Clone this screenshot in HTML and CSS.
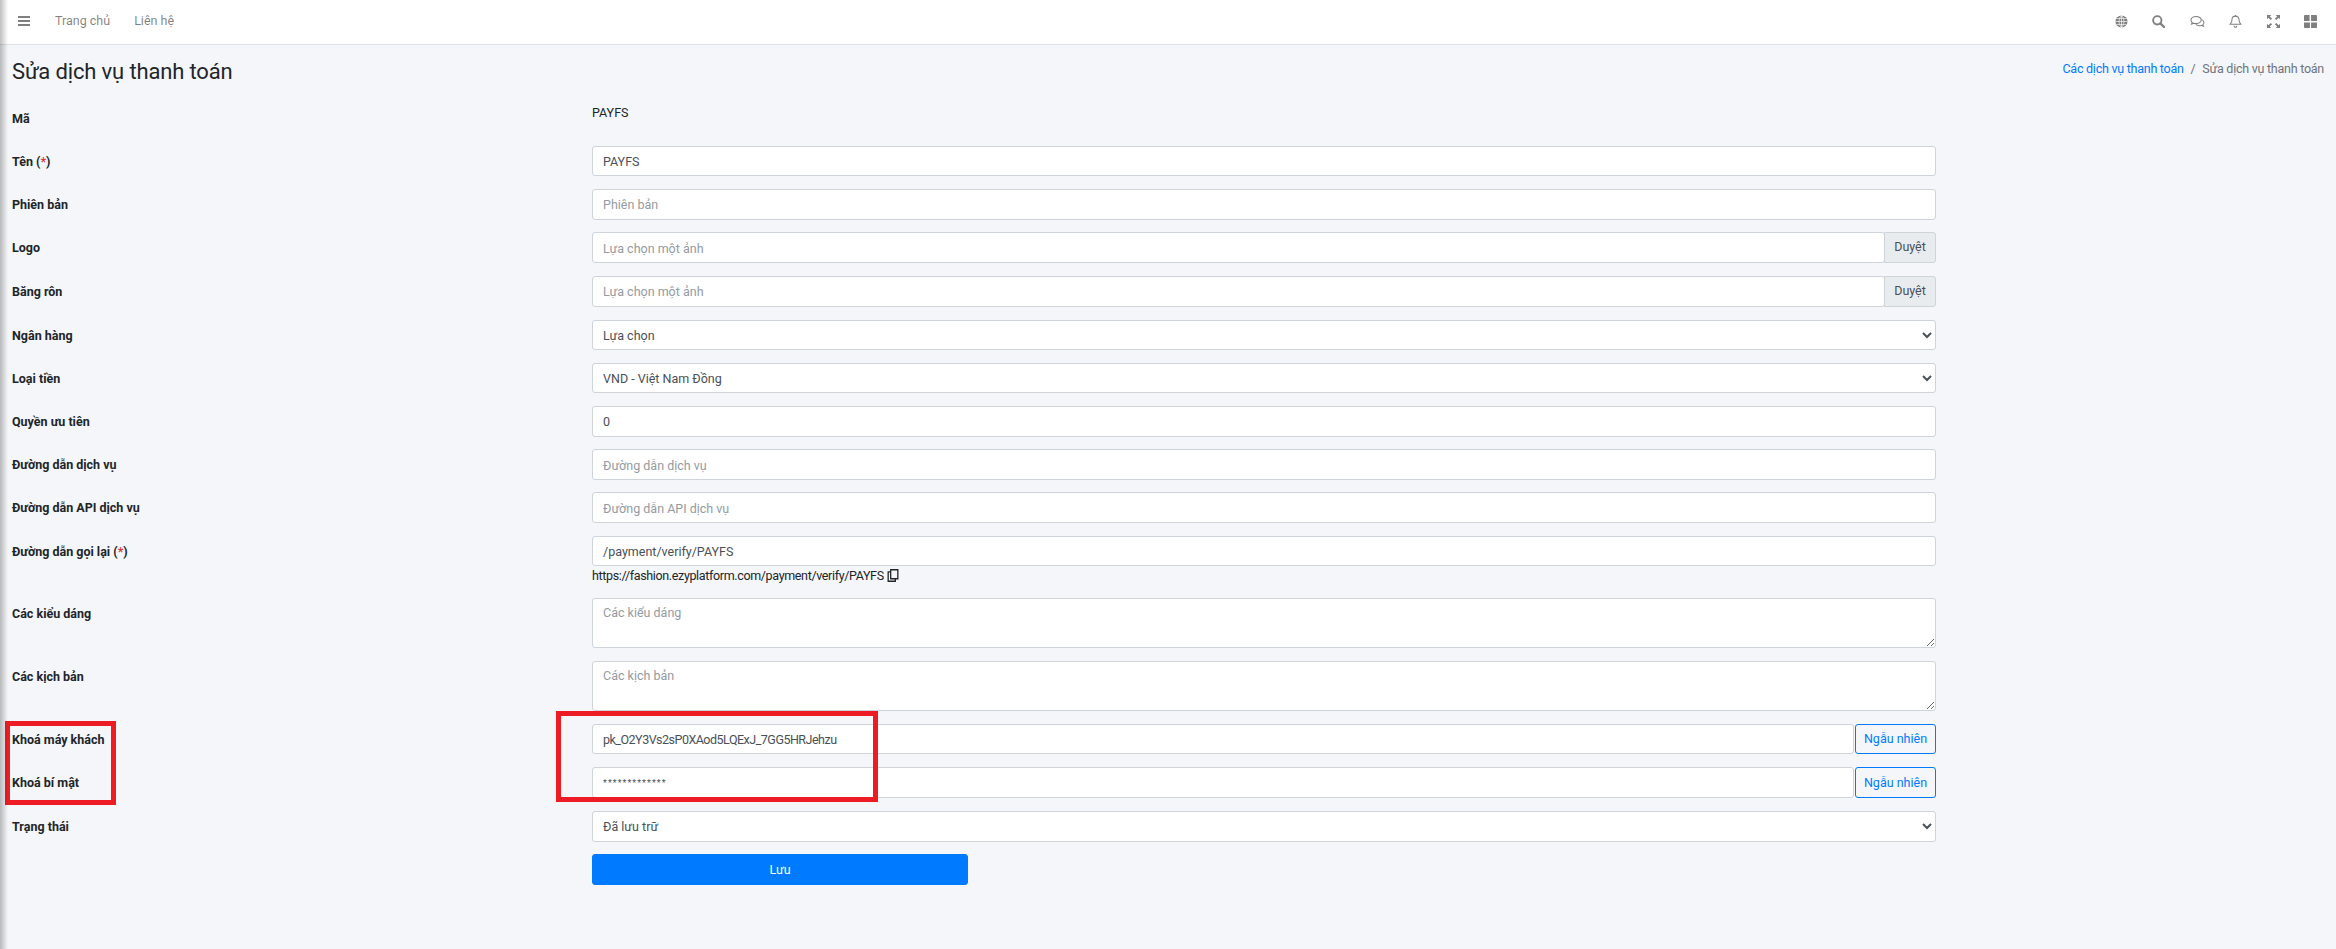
FILE: index.html
```html
<!DOCTYPE html>
<html>
<head>
    <title>Sửa dịch vụ thanh toán</title>
    <link rel="stylesheet" href="styles.css">
</head>
<body>
    <nav class="navbar">
        <div class="nav-left">
            <svg class="icon bars" viewBox="0 0 12 10"><path d="M0 0h12v2H0zM0 4h12v2H0zM0 8h12v2H0z"/></svg>
            <a href="#" class="nav-link">Trang chủ</a>
            <a href="#" class="nav-link">Liên hệ</a>
        </div>
        <div class="nav-right">
            <svg class="icon" viewBox="0 0 14 14"><circle cx="7" cy="7" r="6.5"/><path d="M7 .5v13M.5 7h13M1.5 3.8h11M1.5 10.2h11M7 .5C3.5 4 3.5 10 7 13.5M7 .5c3.5 3.5 3.5 9.500 0 13" fill="none" stroke="#fff" stroke-width=".7"/></svg>
            <svg class="icon" viewBox="0 0 14 14"><circle cx="5.700" cy="5.700" r="4.500" fill="none" stroke="#7f7f7f" stroke-width="2"/><path d="M9 9l4 4" stroke="#7f7f7f" stroke-width="2.400" stroke-linecap="round"/></svg>
            <svg class="icon icon-wide" viewBox="0 0 16 14"><g fill="none" stroke="#7f7f7f" stroke-width="1.100"><path d="M6.500 1.500C3.500 1.500 1 3.200 1 5.400c0 1 .5 1.800 1.300 2.500L1.500 9.800 4 8.800c.8.300 1.600.4 2.500.4 3 0 5.500-1.700 5.500-3.800S9.500 1.500 6.500 1.500z"/><path d="M12.500 5c1.500.7 2.500 1.800 2.500 3 0 .9-.5 1.700-1.200 2.300l.7 1.900-2.500-1c-.7.200-1.400.3-2.100.3-1.500 0-2.900-.5-3.800-1.300"/></g></svg>
            <svg class="icon" viewBox="0 0 14 14"><path d="M7 1.200c-2.400 0-3.800 1.800-3.800 4 0 3-1.700 4.200-2 4.800h11.600c-.3-.6-2-1.800-2-4.800 0-2.200-1.400-4-3.800-4z" fill="none" stroke="#7f7f7f" stroke-width="1.100"/><path d="M7 0v1.500M5.500 11.500c0 1 .7 1.800 1.500 1.800s1.500-.8 1.500-1.800" fill="none" stroke="#7f7f7f" stroke-width="1.100"/></svg>
            <svg class="icon" viewBox="0 0 14 14"><path d="M0 0h4.500L3 1.500 5.500 4 4 5.500 1.500 3 0 4.500zM14 0v4.500L12.500 3 10 5.500 8.500 4 11 1.500 9.500 0zM0 14V9.500L1.500 11 4 8.500 5.500 10 3 12.500 4.500 14zM14 14H9.500l1.500-1.500L8.500 10 10 8.500l2.500 2.500L14 9.500z"/></svg>
            <svg class="icon" viewBox="0 0 14 14"><path d="M0 1a1 1 0 0 1 1-1h5v6.400H0zM7.600 0H13a1 1 0 0 1 1 1v5.400H7.600zM0 8h6.400v6H1a1 1 0 0 1-1-1zM7.600 8H14v5a1 1 0 0 1-1 1H7.600z"/></svg>
        </div>
    </nav>

    <div class="content-header">
        <h1>Sửa dịch vụ thanh toán</h1>
        <div class="breadcrumb">
            <a href="#">Các dịch vụ thanh toán</a>
            <span class="sep">/</span>
            <span class="current">Sửa dịch vụ thanh toán</span>
        </div>
    </div>

    <form class="edit-form">
        <div class="form-row">
            <label>Mã</label>
            <div class="field plain-text">PAYFS</div>
        </div>
        <div class="form-row">
            <label>Tên (<span class="req">*</span>)</label>
            <div class="field"><input class="form-control" value="PAYFS"></div>
        </div>
        <div class="form-row">
            <label>Phiên bản</label>
            <div class="field"><input class="form-control" placeholder="Phiên bản"></div>
        </div>
        <div class="form-row row-group">
            <label>Logo</label>
            <div class="field input-group">
                <input class="form-control" placeholder="Lựa chọn một ảnh">
                <span class="browse">Duyệt</span>
            </div>
        </div>
        <div class="form-row row-group">
            <label>Băng rôn</label>
            <div class="field input-group">
                <input class="form-control" placeholder="Lựa chọn một ảnh">
                <span class="browse">Duyệt</span>
            </div>
        </div>
        <div class="form-row">
            <label>Ngân hàng</label>
            <div class="field"><select class="form-control"><option>Lựa chọn</option></select></div>
        </div>
        <div class="form-row">
            <label>Loại tiền</label>
            <div class="field"><select class="form-control"><option>VND - Việt Nam Đồng</option></select></div>
        </div>
        <div class="form-row">
            <label>Quyền ưu tiên</label>
            <div class="field"><input class="form-control" value="0"></div>
        </div>
        <div class="form-row">
            <label>Đường dẫn dịch vụ</label>
            <div class="field"><input class="form-control" placeholder="Đường dẫn dịch vụ"></div>
        </div>
        <div class="form-row">
            <label>Đường dẫn API dịch vụ</label>
            <div class="field"><input class="form-control" placeholder="Đường dẫn API dịch vụ"></div>
        </div>
        <div class="form-row">
            <label>Đường dẫn gọi lại (<span class="req">*</span>)</label>
            <div class="field">
                <input class="form-control" value="/payment/verify/PAYFS">
                <div class="hint">https://fashion.ezyplatform.com/payment/verify/PAYFS
                    <svg class="copy" viewBox="0 0 12 14"><path d="M3.500.8h7.700v9.700H3.500zM3.500 3H.8v10.200h7.700v-2.700" fill="none" stroke="#212529" stroke-width="1.400"/></svg>
                </div>
            </div>
        </div>
        <div class="form-row">
            <label>Các kiểu dáng</label>
            <div class="field"><textarea class="form-control" placeholder="Các kiểu dáng"></textarea></div>
        </div>
        <div class="form-row">
            <label>Các kịch bản</label>
            <div class="field"><textarea class="form-control" placeholder="Các kịch bản"></textarea></div>
        </div>
        <div class="form-row row-group">
            <label>Khoá máy khách</label>
            <div class="field input-group">
                <input class="form-control key" value="pk_O2Y3Vs2sP0XAod5LQExJ_7GG5HRJehzu">
                <button type="button" class="btn-outline">Ngẫu nhiên</button>
            </div>
        </div>
        <div class="form-row row-group">
            <label>Khoá bí mật</label>
            <div class="field input-group">
                <input class="form-control secret" value="*************">
                <button type="button" class="btn-outline">Ngẫu nhiên</button>
            </div>
        </div>
        <div class="form-row">
            <label>Trạng thái</label>
            <div class="field"><select class="form-control"><option>Đã lưu trữ</option></select></div>
        </div>
        <div class="form-row">
            <span></span>
            <div class="field"><button type="button" class="btn-save">Lưu</button></div>
        </div>
    </form>

    <!-- red marks drawn over the screenshot -->
    <div class="mark mark-labels"></div>
    <div class="mark mark-inputs"></div>
</body>
</html>
```

FILE: styles.css
```css
* {
    box-sizing: border-box;
}
html, body {
    height: 100%;
}
body {
    font-family: Roboto, Arial, sans-serif;
    font-size: 12.5px;
    line-height: 20px;
    background-color: #f4f6f9;
    color: #212529;
    margin: 0;
    padding: 0;
    position: relative;
    overflow: hidden;
}
body::before {
    content: "";
    position: absolute;
    left: 0;
    top: 0;
    bottom: 0;
    width: 8px;
    background: linear-gradient(to right, rgba(0, 0, 0, 0.25), rgba(0, 0, 0, 0));
    z-index: 5;
}
.navbar {
    height: 45px;
    background-color: white;
    border-bottom: 1px solid #dee2e6;
    display: flex;
    justify-content: space-between;
    align-items: center;
    padding: 0 19px 2px 18px;
}
.nav-left, .nav-right {
    display: flex;
    align-items: center;
}
.nav-right {
    gap: 24.500px;
}
.icon {
    width: 13px;
    height: 13px;
    fill: #7f7f7f;
}
.icon-wide {
    width: 15px;
}
.bars {
    width: 12px;
    height: 10px;
    margin-right: 25px;
}
.nav-link {
    color: rgba(0, 0, 0, 0.5);
    text-decoration: none;
    margin-right: 24px;
}
.content-header {
    display: flex;
    justify-content: space-between;
    align-items: flex-start;
    padding: 0 12px;
    height: 57.800px;
}
.content-header h1 {
    margin: 12px 0 0 0;
    font-size: 22px;
    line-height: 30px;
    font-weight: 400;
    letter-spacing: -0.150px;
}
.breadcrumb {
    margin-top: 14px;
    letter-spacing: -0.250px;
}
.breadcrumb a {
    color: #007bff;
    text-decoration: none;
}
.breadcrumb .sep {
    color: #6c757d;
    margin: 0 4px;
}
.breadcrumb .current {
    color: #6c757d;
}
.edit-form {
    padding: 0 400px 0 12px;
}
.form-row {
    display: grid;
    grid-template-columns: 580px 1fr;
    margin-bottom: 12.700px;
}
.form-row.row-group {
    margin-bottom: 13.200px;
}
.form-row label {
    font-weight: 700;
    padding-top: 6px;
}
.req {
    color: #dc3545;
}
.plain-text {
    height: 30.500px;
}
.field {
    min-width: 0;
}
.input-group {
    display: flex;
}
.form-control {
    display: block;
    width: 100%;
    height: 30.500px;
    padding: 5px 10px 4px;
    font-family: inherit;
    font-size: 12.500px;
    color: #495057;
    background-color: white;
    border: 1px solid #ced4da;
    border-radius: 3px;
}
.form-control::placeholder {
    color: #939ba2;
}
.key {
    letter-spacing: -0.500px;
}
.secret {
    font-size: 8.800px;
    letter-spacing: 1.100px;
}
textarea.form-control {
    height: 50px;
    padding-top: 6px;
}
select.form-control {
    padding-left: 6px;
}
.hint {
    height: 19.500px;
    display: flex;
    align-items: center;
    gap: 3px;
    letter-spacing: -0.350px;
}
.copy {
    width: 12px;
    height: 13px;
}
.browse {
    background-color: #e9ecef;
    border: 1px solid #ced4da;
    border-radius: 0 3px 3px 0;
    color: #495057;
    margin-left: -1px;
    width: 52px;
    text-align: center;
    line-height: 28px;
    flex: none;
}
.btn-outline {
    flex: none;
    width: 81px;
    margin-left: 1px;
    background-color: transparent;
    color: #007bff;
    border: 1px solid #007bff;
    border-radius: 3px;
    font-family: inherit;
    font-size: 12.500px;
    padding: 0;
}
.btn-save {
    width: 376px;
    height: 31px;
    background-color: #007bff;
    color: white;
    border: 1px solid #007bff;
    border-radius: 3px;
    font-family: inherit;
    font-size: 12.500px;
}
.mark {
    position: absolute;
    border: 5px solid #ed1c24;
    pointer-events: none;
}
.mark-labels {
    left: 5px;
    top: 721px;
    width: 111px;
    height: 84px;
}
.mark-inputs {
    left: 556px;
    top: 711px;
    width: 322px;
    height: 91px;
}
```
